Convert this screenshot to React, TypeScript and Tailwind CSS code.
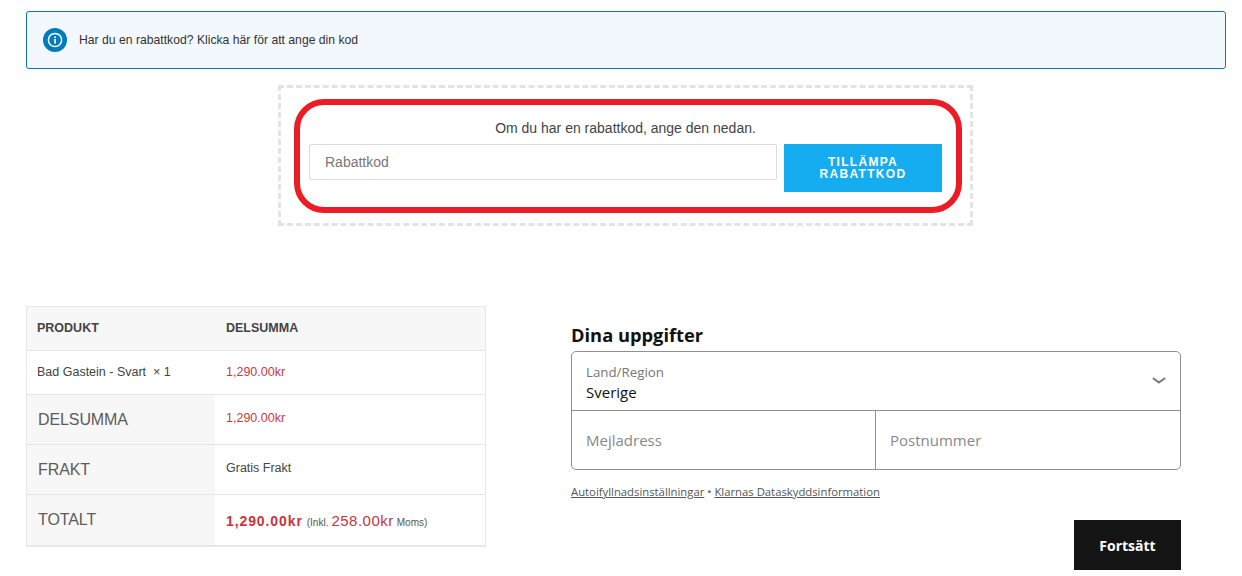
const arial = "font-['Liberation_Sans',Arial,sans-serif]";
const klarna = "font-['Open_Sans','Noto_Sans',sans-serif]";

function SummaryRow({ label, last, children }: { label: string; last?: boolean; children: React.ReactNode }) {
  return (
    <div className={`flex h-[50px] ${last ? "" : "border-b border-[#e6e6e6]"}`}>
      <div className="w-[188px] bg-[#f7f7f7] pl-[11px] flex items-center text-[16px] text-[#5c5c5c] tracking-[-0.1px]">{label}</div>
      <div className="flex-1 pl-[11px] flex items-center">{children}</div>
    </div>
  );
}

export default function App() {
  return (
    <div className={`w-[1242px] h-[576px] overflow-hidden bg-white px-[26px] pt-[11px] ${arial}`}>
      {/* Coupon notice */}
      <div className="w-[1200px] h-[58px] bg-[#f3f8fe] border border-[#0f7c9e] rounded-[3px] flex items-center pl-4 gap-3">
        <div className="w-6 h-6 rounded-full bg-[#007cba] flex items-center justify-center">
          <svg width="16" height="16" viewBox="0 0 16 16" fill="none">
            <circle cx="8" cy="8" r="6.6" stroke="white" strokeWidth="1.5" />
            <rect x="7.2" y="7" width="1.7" height="4.6" fill="white" />
            <rect x="7.2" y="4.4" width="1.7" height="1.7" fill="white" />
          </svg>
        </div>
        <span className="text-[12.2px] text-[#333]">Har du en rabattkod? Klicka här för att ange din kod</span>
      </div>

      {/* Coupon form */}
      <div className="mt-4 ml-[252px] w-[695px] h-[141px] border-[3px] border-dashed border-[#e3e3e3] pt-[11px] pl-[13px]">
        <div className="w-[668px] h-[114px] border-[6px] border-[#ec1c24] rounded-[30px] pt-[15px] pl-[9px]">
          <p className="w-[633px] text-center text-[14px] leading-4 text-[#444]">Om du har en rabattkod, ange den nedan.</p>
          <div className="flex gap-[7px] mt-2 items-start">
            <div className="w-[468px] h-9 border border-[#dcdcdc] rounded-[2px] flex items-center pl-[15px] text-[14px] text-[#777]">Rabattkod</div>
            <button className="w-[158px] h-12 bg-[#15adf0] text-white text-[12px] leading-3 font-bold tracking-[1.3px] text-center">
              TILLÄMPA<br />RABATTKOD
            </button>
          </div>
        </div>
      </div>

      <div className="flex mt-20 items-start">
        {/* Order summary */}
        <div className="w-[460px] border border-[#e8e8e8] border-b-2 text-[12.5px]">
          <div className="flex h-[44px] bg-[#f7f7f7] border-b border-[#e6e6e6] items-center font-bold text-[#444]">
            <div className="w-[199px] pl-[10px]">PRODUKT</div>
            <div>DELSUMMA</div>
          </div>
          <div className="flex h-11 border-b border-[#e6e6e6] items-center text-[#444]">
            <div className="w-[199px] pl-[10px]">Bad Gastein - Svart&nbsp; × 1</div>
            <div className="text-[#c53a44]">1,290.00kr</div>
          </div>
          <SummaryRow label="DELSUMMA">
            <span className="text-[#c53a44] mb-0.5">1,290.00kr</span>
          </SummaryRow>
          <SummaryRow label="FRAKT">
            <span className="text-[#444] mb-0.5">Gratis Frakt</span>
          </SummaryRow>
          <SummaryRow label="TOTALT" last>
            <span className="flex items-baseline mt-0.5 text-[#c9343c]">
              <b className="text-[14px] tracking-[0.9px]">1,290.00kr</b>
              <span className="text-[10px] text-[#555] ml-1">(Inkl.</span>
              <span className="text-[15px] ml-[3px] tracking-[0.5px]">258.00kr</span>
              <span className="text-[10px] text-[#555] ml-[3px]">Moms)</span>
            </span>
          </SummaryRow>
        </div>

        {/* Klarna form */}
        <div className={`ml-[85px] w-[610px] mt-[17px] ${klarna}`}>
          <h2 className="text-[18.3px] leading-6 font-bold text-[#111]">Dina uppgifter</h2>
          <div className="mt-[4px] h-[119px] border border-[#8f8f8f] rounded-[5px]">
            <div className="h-[59px] border-b border-[#8f8f8f] pl-[14px] pt-[11px] flex justify-between">
              <div>
                <div className="text-[13.3px] leading-[18px] text-[#777]">Land/Region</div>
                <div className="text-[15px] leading-5 mt-px text-[#111]">Sverige</div>
              </div>
              <svg width="14" height="8" viewBox="0 0 14 8" fill="none" className="mr-[14px] mt-[14px]">
                <path d="M1.5 1.5 L7 5.5 L12.5 1.5" stroke="#777" strokeWidth="2" strokeLinecap="round" strokeLinejoin="round" />
              </svg>
            </div>
            <div className="flex h-[58px] text-[15px] text-[#888]">
              <div className="w-[304px] border-r border-[#8f8f8f] pl-[14px] flex items-center">Mejladress</div>
              <div className="pl-[14px] flex items-center">Postnummer</div>
            </div>
          </div>
          <div className="mt-[14px] text-[11.3px] leading-4 text-[#555]">
            <span className="underline">Autoifyllnadsinställningar</span>
            <span> • </span>
            <span className="underline">Klarnas Dataskyddsinformation</span>
          </div>
          <div className="flex justify-end mt-5">
            <button className="w-[107px] h-[50px] bg-[#141414] text-white text-[14px] font-bold">Fortsätt</button>
          </div>
        </div>
      </div>
    </div>
  );
}
